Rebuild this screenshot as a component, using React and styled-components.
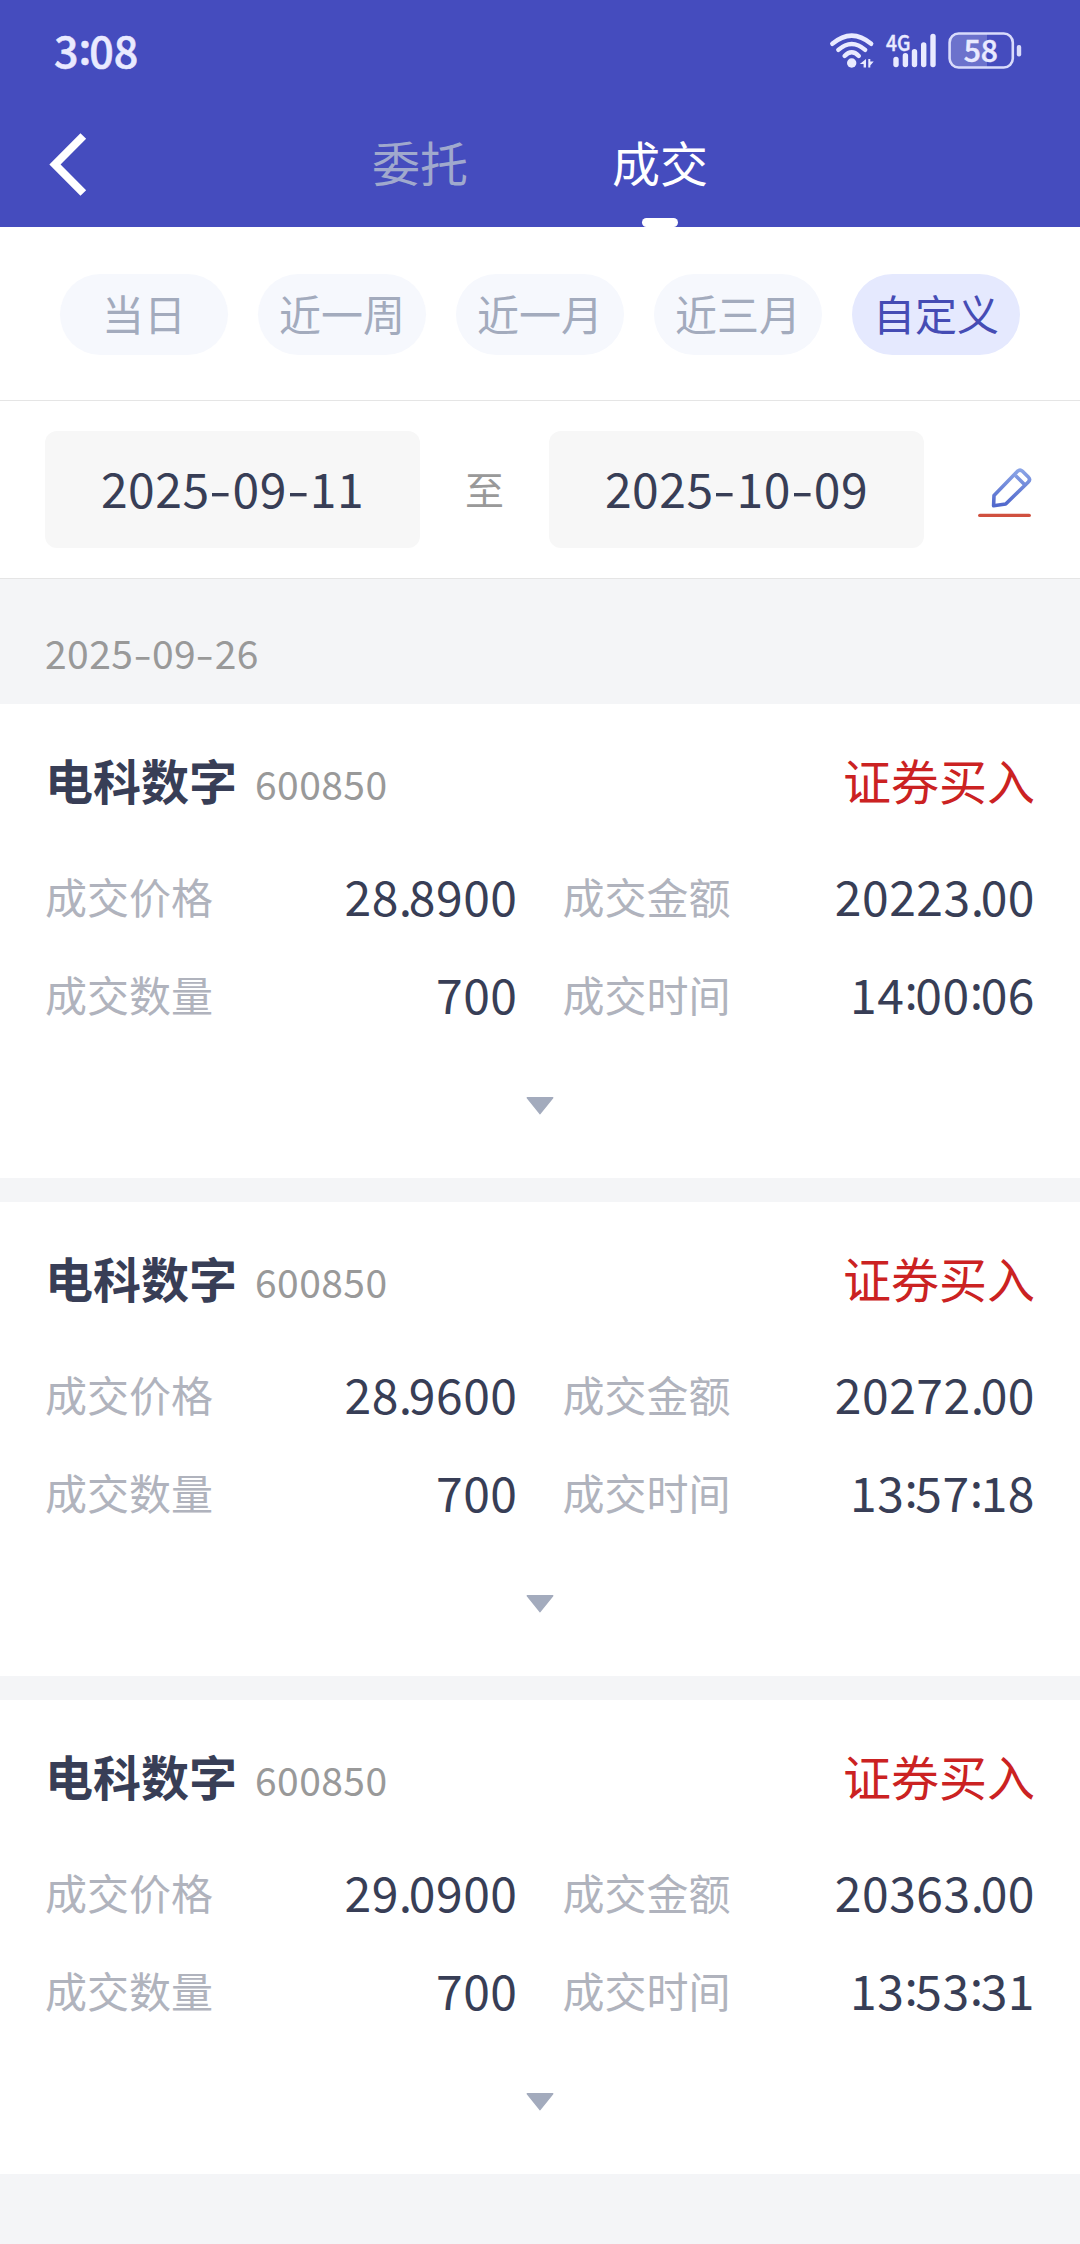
import React from "react";
import styled, { createGlobalStyle } from "styled-components";

const GlobalStyle = createGlobalStyle`
  * {
    box-sizing: border-box;
  }

  body {
    margin: 0;
    background: #f4f5f7;
    font-family: "Noto Sans CJK SC", sans-serif;
    color: #383e56;
  }
`;

const Page = styled.div`
  width: 1080px;
  height: 2244px;
  overflow: hidden;
  background: #f4f5f7;
`;

const Header = styled.header`
  height: 227px;
  background: #454cbe;
`;

const StatusBar = styled.div`
  height: 102px;
  padding: 0 58px 0 54px;
  display: flex;
  align-items: center;
  justify-content: space-between;
`;

const Clock = styled.span`
  font-size: 43px;
  font-weight: 500;
  line-height: 50px;
  padding-bottom: 5px;
  color: #e9eaff;
  -webkit-text-stroke: 0.6px #e9eaff;
`;

const StatusIcons = styled.div`
  display: flex;
  align-items: center;
`;

const NavBar = styled.nav`
  height: 125px;
  display: grid;
  grid-template-columns: 300px 480px 300px;
`;

const BackButton = styled.button`
  border: 0;
  padding: 0 0 0 45px;
  background: none;
  display: flex;
  align-items: center;
  height: 124px;
`;

const Tabs = styled.div`
  display: flex;
`;

const Tab = styled.div`
  flex: 1;
  display: flex;
  flex-flow: column;
  align-items: center;
  justify-content: space-between;
  font-size: 48px;
  line-height: 70px;
  padding-top: 24px;
  color: ${({ $active }) => ($active ? "#fff" : "#a0a9cd")};

  &::after {
    content: "";
    width: 36px;
    height: 9px;
    border-radius: 5px;
    background: ${({ $active }) => ($active ? "#fff" : "transparent")};
  }
`;

const Ranges = styled.div`
  height: 174px;
  padding: 47px 60px 0;
  display: flex;
  gap: 30px;
  background: #fff;
  border-bottom: 1px solid #e5e5e5;
`;

const Range = styled.div`
  width: 168px;
  height: 81px;
  border-radius: 41px;
  font-size: 42px;
  line-height: 77px;
  text-align: center;
  color: ${({ $active }) => ($active ? "#454cb4" : "#a3abbd")};
  background: ${({ $active }) => ($active ? "#e5e9fe" : "#f6f8fd")};
`;

const DateBar = styled.div`
  height: 178px;
  padding: 0 45px;
  display: flex;
  align-items: center;
  background: #fff;
  border-bottom: 1px solid #e5e5e5;
`;

const DateField = styled.div`
  width: 375px;
  height: 117px;
  border-radius: 12px;
  background: #f7f7f7;
  font-size: 48px;
  line-height: 113px;
  text-align: center;
  letter-spacing: 0.011em;
`;

const To = styled.span`
  width: 129px;
  padding-bottom: 3px;
  text-align: center;
  font-size: 39px;
  color: #999;
`;

const EditButton = styled.button`
  border: 0;
  padding: 0;
  margin-left: auto;
  background: none;
  display: flex;
`;

const DayTitle = styled.h2`
  margin: 0;
  height: 125px;
  padding: 45px 45px 0;
  font-size: 39px;
  font-weight: 400;
  line-height: 56px;
  letter-spacing: 0.011em;
  color: #999;
`;

const Dash = styled.span`
  display: inline-block;
  transform: scaleX(1.35);
  margin: 0 0.06em;
`;

const Narrow = styled.span`
  letter-spacing: ${({ $raised }) => ($raised ? "-0.05em" : "-0.07em")};
  vertical-align: ${({ $raised }) => ($raised ? "0.1em" : "baseline")};
  line-height: 0;
`;

const Card = styled.section`
  height: 474px;
  margin-bottom: 24px;
  padding: 39px 45px 0;
  background: #fff;
`;

const CardHead = styled.div`
  height: 76px;
  display: flex;
  align-items: baseline;
  line-height: 72px;
`;

const StockName = styled.span`
  font-size: 48px;
  font-weight: 700;
`;

const StockCode = styled.span`
  margin-left: 18px;
  font-size: 39px;
  letter-spacing: 0.011em;
  color: #999;
`;

const Side = styled.span`
  margin-left: auto;
  font-size: 48px;
  color: #cb2222;
`;

const Details = styled.div`
  margin-top: 27px;
  display: grid;
  grid-template-columns: 1fr 1fr;
  grid-auto-rows: 98px;
  column-gap: 45px;
`;

const Detail = styled.div`
  display: flex;
  align-items: center;
  justify-content: space-between;
  height: 98px;
`;

const Label = styled.span`
  font-size: 42px;
  color: #b0b3bd;
`;

const Value = styled.span`
  font-size: 48px;
  letter-spacing: 0.011em;
`;

const Expand = styled.div`
  display: flex;
  justify-content: center;
  margin-top: 55px;
`;

const ranges = ["当日", "近一周", "近一月", "近三月", "自定义"];

const deals = [
  { price: "28.8900", amount: "20223.00", count: "700", time: "14:00:06" },
  { price: "28.9600", amount: "20272.00", count: "700", time: "13:57:18" },
  { price: "29.0900", amount: "20363.00", count: "700", time: "13:53:31" },
];

// punctuation is spaced differently from the digits
const Numeric = ({ children }) =>
  children.split(/([-.:])/).map((part, i) => {
    if (part === "-") return <Dash key={i}>-</Dash>;
    if (part === "." || part === ":") {
      return (
        <Narrow key={i} $raised={part === ":"}>
          {part}
        </Narrow>
      );
    }
    return part;
  });

const WifiIcon = () => (
  <svg width="56" height="60" viewBox="0 0 56 60" fill="none" stroke="#e9eaff">
    <g strokeWidth="4.4" strokeLinecap="round">
      <path d="M4.3 22.8Q23.7 6.4 43.2 22.8" />
      <path d="M10.3 28.9Q23.7 17 37.2 28.9" />
      <path d="M16.6 35Q23.7 27.4 30.8 35" />
    </g>
    <circle cx="23.7" cy="42" r="4.7" fill="#e9eaff" stroke="none" />
    <path
      d="M38 38v8.5h-2.4v-3.5h-3.8zM40.3 38h2v2.4h3.4l-3.4 4v2.1h-2z"
      fill="#e9eaff"
      stroke="none"
    />
  </svg>
);

const SignalIcon = () => (
  <svg width="62" height="60" viewBox="0 0 62 60" fill="#e9eaff">
    <text
      x="2"
      y="29.5"
      fontFamily="Noto Sans CJK SC"
      fontSize="22"
      fontWeight="500"
      stroke="#e9eaff"
      strokeWidth="0.4"
      textLength="24.5"
      lengthAdjust="spacingAndGlyphs"
    >
      4G
    </text>
    <rect x="9.3" y="35.7" width="5.4" height="10.6" rx="2.7" />
    <rect x="18.7" y="32" width="5.4" height="14.3" rx="2.7" />
    <rect x="27.8" y="28" width="5.4" height="18.3" rx="2.7" />
    <rect x="37" y="21.3" width="5.4" height="25" rx="2.7" />
    <rect x="46.3" y="12.7" width="5.4" height="33.6" rx="2.7" />
  </svg>
);

const BatteryIcon = () => (
  <svg width="76" height="60" viewBox="0 0 76 60">
    <path d="M12 12.6H41V46.4H12a8 8 0 0 1-8-8V20.6a8 8 0 0 1 8-8z" fill="#6c72cc" />
    <rect
      x="3.6"
      y="12.5"
      width="63.2"
      height="34"
      rx="9"
      fill="none"
      stroke="#d9dbfb"
      strokeWidth="2.6"
    />
    <rect x="70.8" y="24" width="4.4" height="11.5" rx="2" fill="#d9dbfb" />
    <text
      x="34.8"
      y="40.6"
      textAnchor="middle"
      fontFamily="Noto Sans CJK SC"
      fontSize="30"
      fontWeight="500"
      fill="#e9eaff"
      stroke="#e9eaff"
      strokeWidth="0.5"
    >
      58
    </text>
  </svg>
);

const BackIcon = () => (
  <svg width="46" height="66" viewBox="0 0 46 66" fill="none">
    <path d="M38.3 5L10 33.5L38.3 62" stroke="#fff" strokeWidth="8" />
  </svg>
);

const EditIcon = () => (
  <svg width="58" height="61" viewBox="0 0 58 61" fill="none">
    <defs>
      <linearGradient id="pencil" x1="0" y1="0" x2="0" y2="1">
        <stop offset="0" stopColor="#8aa4e6" />
        <stop offset="1" stopColor="#5168cc" />
      </linearGradient>
    </defs>
    <path
      d="M17 36.5L40.5 12.3Q43 9.8 45.5 12.3L51.3 18Q53.8 20.5 51.3 23L28.7 45L16.6 46.7ZM38.7 16.7L47 25"
      stroke="url(#pencil)"
      strokeWidth="3.6"
      strokeLinejoin="round"
    />
    <path d="M2.8 56.4H52.2" stroke="#d0503f" strokeWidth="3.4" strokeLinecap="round" />
  </svg>
);

const ArrowIcon = () => (
  <svg width="28" height="18" viewBox="0 0 28 18">
    <path
      d="M1.3 0.8H26.7L14 16.6Z"
      fill="#a3abbd"
      stroke="#a3abbd"
      strokeWidth="1.5"
      strokeLinejoin="round"
    />
  </svg>
);

const Deal = ({ deal }) => (
  <Card>
    <CardHead>
      <StockName>电科数字</StockName>
      <StockCode>600850</StockCode>
      <Side>证券买入</Side>
    </CardHead>
    <Details>
      <Detail>
        <Label>成交价格</Label>
        <Value>
          <Numeric>{deal.price}</Numeric>
        </Value>
      </Detail>
      <Detail>
        <Label>成交金额</Label>
        <Value>
          <Numeric>{deal.amount}</Numeric>
        </Value>
      </Detail>
      <Detail>
        <Label>成交数量</Label>
        <Value>
          <Numeric>{deal.count}</Numeric>
        </Value>
      </Detail>
      <Detail>
        <Label>成交时间</Label>
        <Value>
          <Numeric>{deal.time}</Numeric>
        </Value>
      </Detail>
    </Details>
    <Expand>
      <ArrowIcon />
    </Expand>
  </Card>
);

const App = () => (
  <Page>
    <GlobalStyle />
    <Header>
      <StatusBar>
        <Clock>
          <Numeric>3:08</Numeric>
        </Clock>
        <StatusIcons>
          <WifiIcon />
          <SignalIcon />
          <BatteryIcon />
        </StatusIcons>
      </StatusBar>
      <NavBar>
        <BackButton>
          <BackIcon />
        </BackButton>
        <Tabs>
          <Tab>委托</Tab>
          <Tab $active>成交</Tab>
        </Tabs>
      </NavBar>
    </Header>
    <Ranges>
      {ranges.map((name) => (
        <Range key={name} $active={name === "自定义"}>
          {name}
        </Range>
      ))}
    </Ranges>
    <DateBar>
      <DateField>
        <Numeric>2025-09-11</Numeric>
      </DateField>
      <To>至</To>
      <DateField>
        <Numeric>2025-10-09</Numeric>
      </DateField>
      <EditButton>
        <EditIcon />
      </EditButton>
    </DateBar>
    <DayTitle>
      <Numeric>2025-09-26</Numeric>
    </DayTitle>
    {deals.map((deal) => (
      <Deal key={deal.time} deal={deal} />
    ))}
  </Page>
);

export default App;
